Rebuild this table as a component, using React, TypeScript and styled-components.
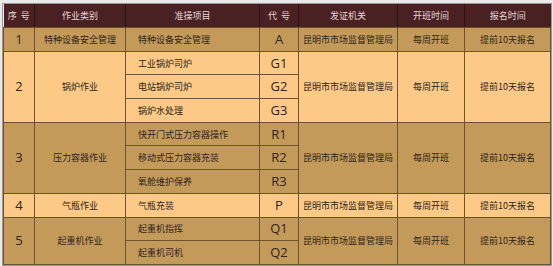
import React from 'react';
import styled, { createGlobalStyle } from 'styled-components';

const GlobalStyle = createGlobalStyle`
  html, body {
    margin: 0;
    padding: 0;
    background: #e9e9e9;
  }
  body {
    font-family: "Noto Sans CJK SC", "Noto Sans", sans-serif;
  }
`;

const Page = styled.div`
  padding: 4px 3px 2px 3px;
  width: 553px;
  height: 266px;
  box-sizing: border-box;
`;

const Table = styled.table`
  border-collapse: collapse;
  table-layout: fixed;
  width: 547px;
  outline: 1px solid #9a9a9a;
`;

const HeadCell = styled.th`
  background: #4a2123;
  color: #e6d6d6;
  font-weight: normal;
  font-size: 9px;
  height: 23px;
  padding: 0;
  text-align: center;
  border-right: 1px solid #2c1212;
  border-bottom: 1px solid #6b4a2a;
  white-space: pre;

  &:last-child {
    border-right: none;
  }
`;

const Cell = styled.td<{ $dark: boolean; $left?: boolean; $big?: boolean }>`
  background: ${(p) => (p.$dark ? '#c49a5b' : '#fcca86')};
  color: #2f2519;
  border: 1px solid #6e5230;
  padding: 0 ${(p) => (p.$left ? '12px' : '0')};
  text-align: ${(p) => (p.$left ? 'left' : 'center')};
  font-size: ${(p) => (p.$big ? '13px' : '9px')};
  font-family: ${(p) =>
    p.$big ? '"Open Sans", "Noto Sans", sans-serif' : '"Noto Sans CJK SC", sans-serif'};
  white-space: nowrap;
  height: 22.7px;
  line-height: 1;
`;

type Group = {
  no: string;
  kind: string;
  items: [string, string][];
};

const groups: Group[] = [
  { no: '1', kind: '特种设备安全管理', items: [['特种设备安全管理', 'A']] },
  {
    no: '2',
    kind: '锅炉作业',
    items: [
      ['工业锅炉司炉', 'G1'],
      ['电站锅炉司炉', 'G2'],
      ['锅炉水处理', 'G3'],
    ],
  },
  {
    no: '3',
    kind: '压力容器作业',
    items: [
      ['快开门式压力容器操作', 'R1'],
      ['移动式压力容器充装', 'R2'],
      ['氧舱维护保养', 'R3'],
    ],
  },
  { no: '4', kind: '气瓶作业', items: [['气瓶充装', 'P']] },
  {
    no: '5',
    kind: '起重机作业',
    items: [
      ['起重机指挥', 'Q1'],
      ['起重机司机', 'Q2'],
    ],
  },
];

const widths = [31, 91, 134, 39, 99, 67, 86];
const headers = ['序  号', '作业类别', '准操项目', '代  号', '发证机关', '开班时间', '报名时间'];

const App = () => (
  <>
    <GlobalStyle />
    <Page>
      <Table>
        <colgroup>
          {widths.map((w, i) => (
            <col key={i} style={{ width: w }} />
          ))}
        </colgroup>
        <thead>
          <tr>
            {headers.map((h) => (
              <HeadCell key={h}>{h}</HeadCell>
            ))}
          </tr>
        </thead>
        <tbody>
          {groups.map((g, gi) => {
            const dark = gi % 2 === 0;
            const span = g.items.length;
            return g.items.map(([item, code], ii) => (
              <tr key={code}>
                {ii === 0 && (
                  <>
                    <Cell $dark={dark} $big rowSpan={span}>{g.no}</Cell>
                    <Cell $dark={dark} rowSpan={span}>{g.kind}</Cell>
                  </>
                )}
                <Cell $dark={dark} $left>{item}</Cell>
                <Cell $dark={dark} $big>{code}</Cell>
                {ii === 0 && (
                  <>
                    <Cell $dark={dark} rowSpan={span}>昆明市市场监督管理局</Cell>
                    <Cell $dark={dark} rowSpan={span}>每周开班</Cell>
                    <Cell $dark={dark} rowSpan={span}>提前10天报名</Cell>
                  </>
                )}
              </tr>
            ));
          })}
        </tbody>
      </Table>
    </Page>
  </>
);

export default App;
